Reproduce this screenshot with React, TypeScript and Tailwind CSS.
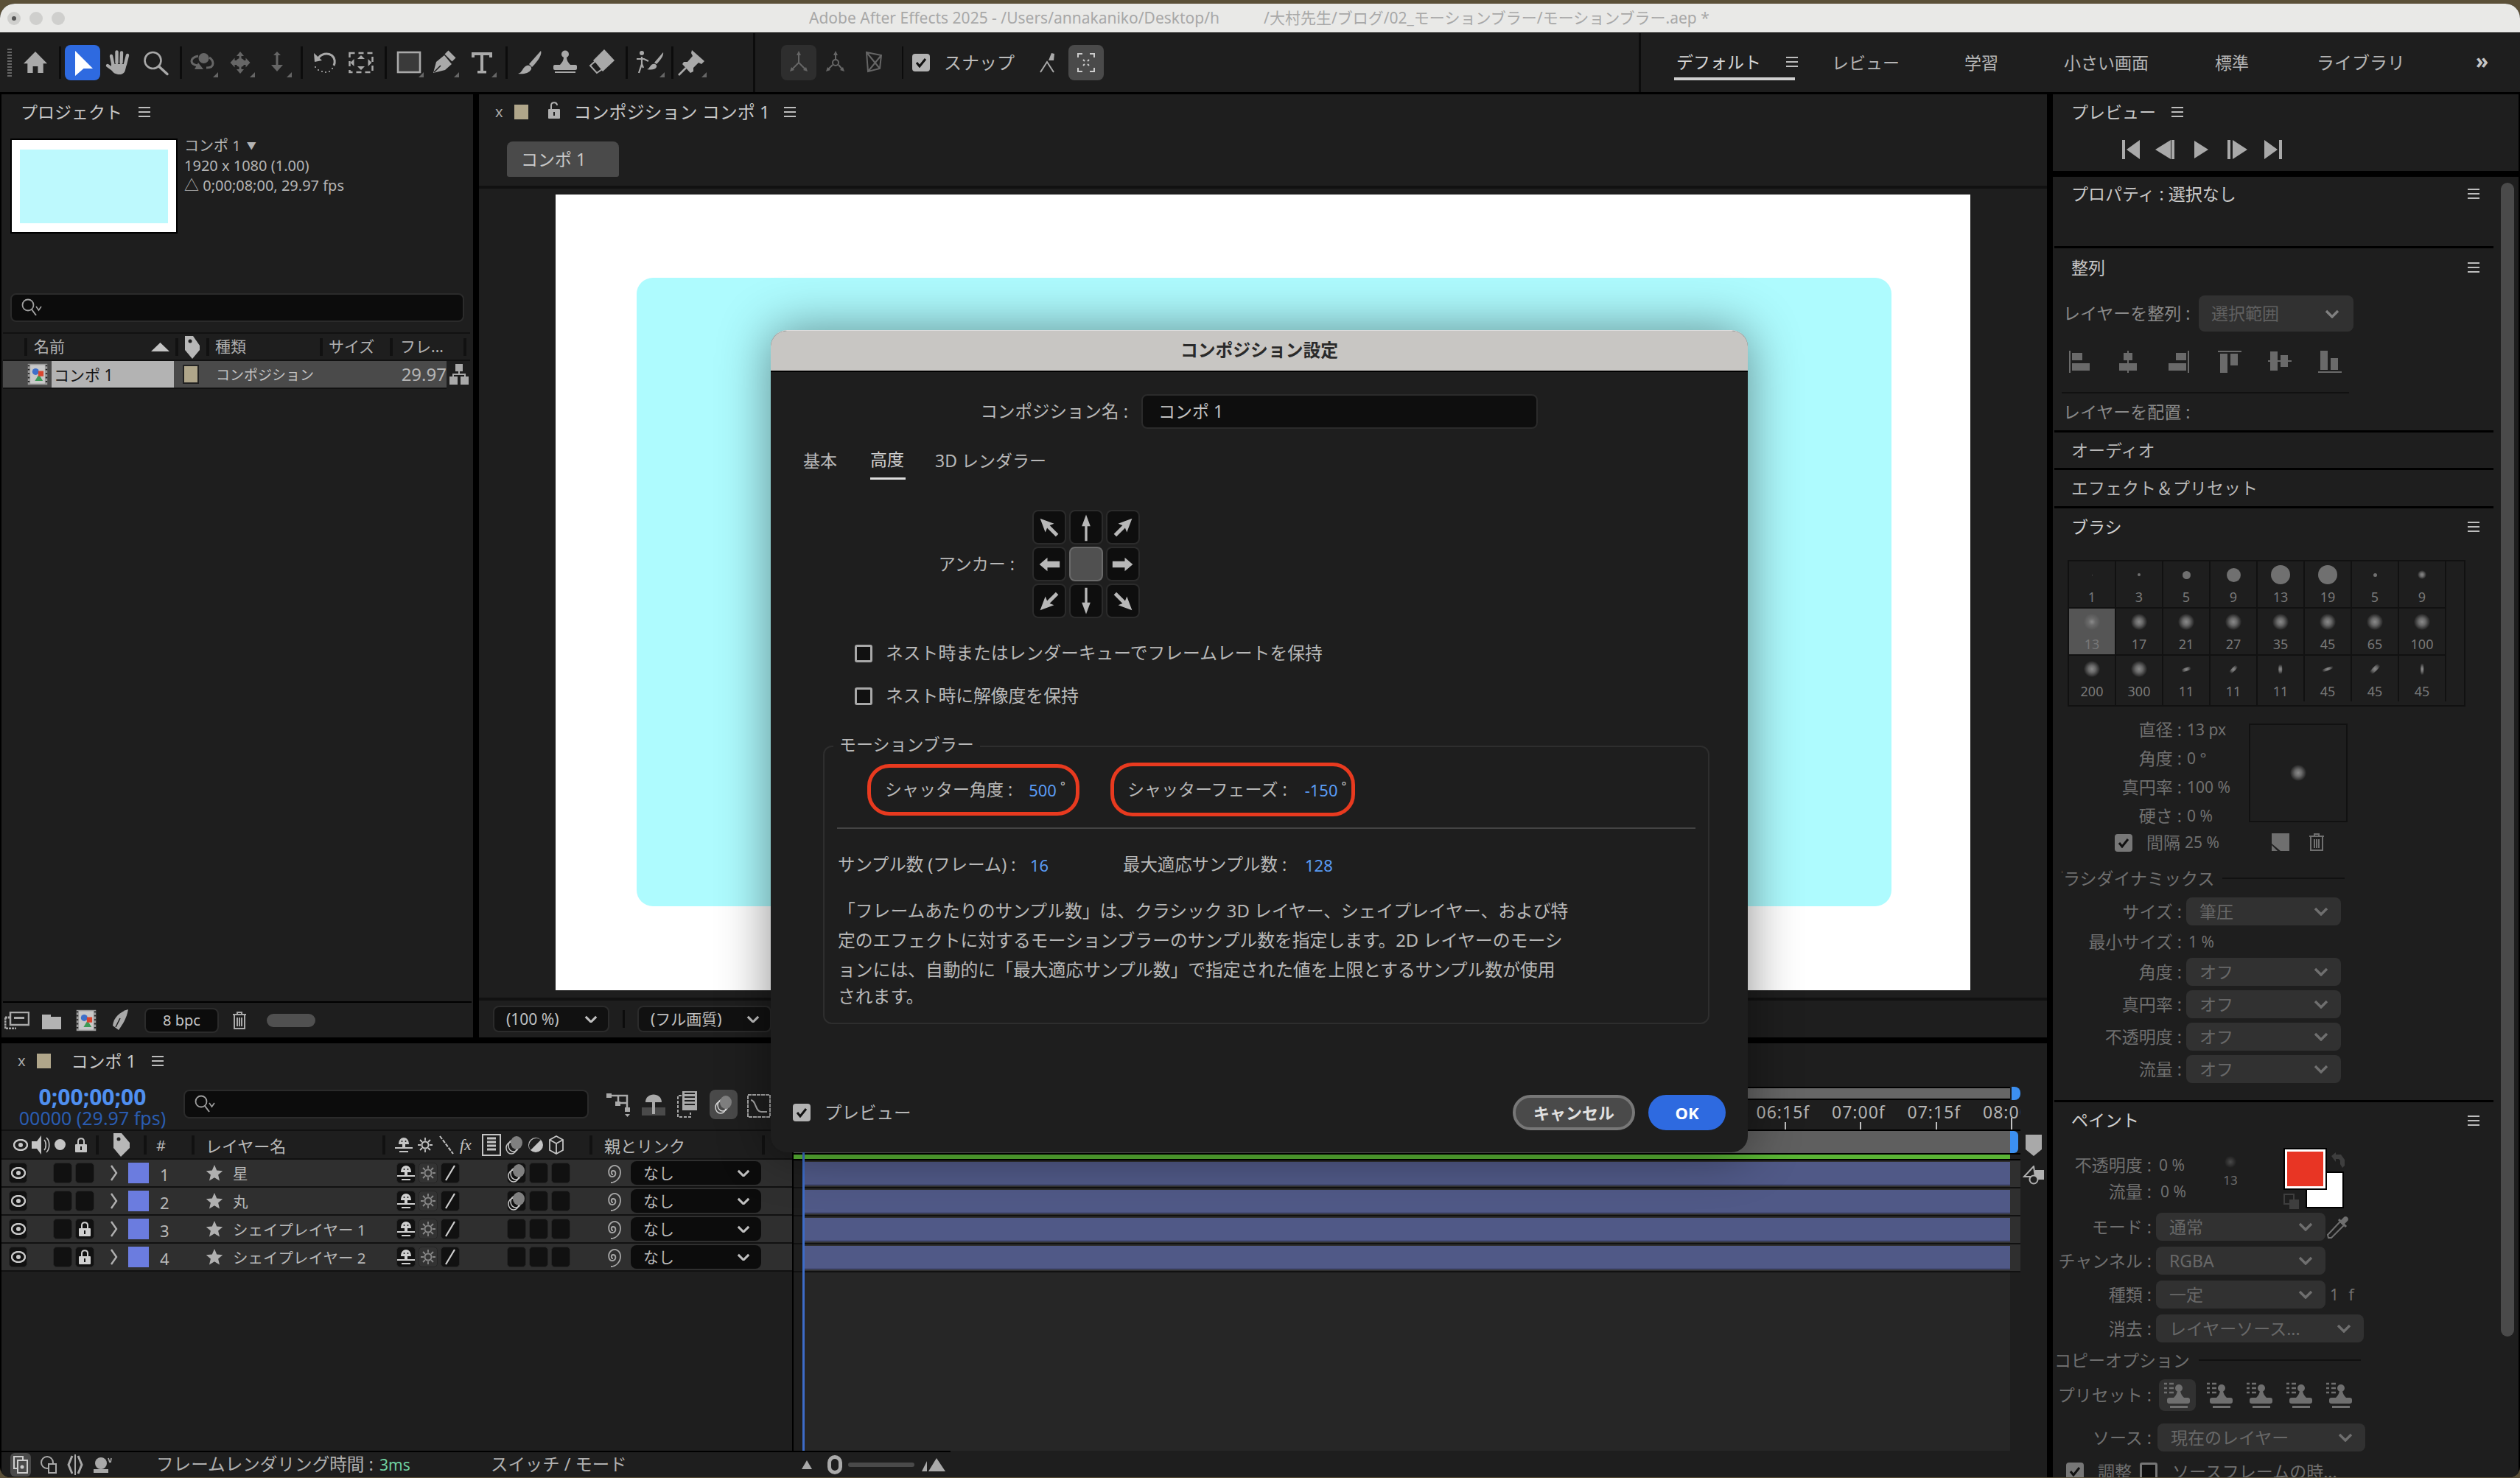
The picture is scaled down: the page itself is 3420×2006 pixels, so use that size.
import React from "react";

const C = "#a9a9a9";
const D = "#666666";

function Svg({ w = 48, h = 48, children, className = "" }: { w?: number; h?: number; children?: React.ReactNode; className?: string }) {
  return (
    <svg width={w} height={h} viewBox={`0 0 ${w} ${h}`} className={"block flex-none " + className}>
      {children}
    </svg>
  );
}

const Fly = ({ c = D }: { c?: string }) => <path d="M44 37v7h-7z" fill={c} />;

function Menu({ c = "#bdbdbd" }: { c?: string }) {
  return (
    <svg width={16} height={14} viewBox="0 0 16 14" className="block flex-none">
      <rect x="0" y="0" width="16" height="2" fill={c} />
      <rect x="0" y="6" width="16" height="2" fill={c} />
      <rect x="0" y="12" width="16" height="2" fill={c} />
    </svg>
  );
}

function Chevron({ c = "#777", s = 20 }: { c?: string; s?: number }) {
  return (
    <svg width={s} height={s * 0.6} viewBox="0 0 20 12" className="block flex-none">
      <path d="M2 2l8 8 8-8" fill="none" stroke={c} strokeWidth="3.4" />
    </svg>
  );
}

function Check({ dim = false, className = "" }: { dim?: boolean; className?: string }) {
  return (
    <div className={(dim ? "bg-[#777] " : "bg-[#b3b3b3] ") + "w-[24px] h-[24px] rounded-[4px] flex items-center justify-center flex-none " + className}>
      <svg width={16} height={14} viewBox="0 0 16 14">
        <path d="M2 7l4 5 8-10" fill="none" stroke="#111" strokeWidth="3" />
      </svg>
    </div>
  );
}

function Box({ className = "" }: { className?: string }) {
  return <div className={"w-[24px] h-[24px] rounded-[3px] border-[3px] border-[#a8a8a8] bg-[#111] flex-none " + className} />;
}

const Sep = () => <div className="w-[3px] h-[44px] bg-[#0c0c0c] flex-none" />;

function ToolBarLeft() {
  return (
    <div className="flex items-center h-full w-[1022px] flex-none">
      <div className="ml-[10px] w-[6px] h-[38px] flex-none bg-[repeating-linear-gradient(180deg,#666_0,#666_2px,#1e1e1e_2px,#1e1e1e_4px)]" />
      <div className="w-[64px] flex justify-center flex-none">
        <Svg><path d="M24 9L8 25.300h5.300V38h7.300v-9h6.800v9h7.300V25.300H40z" fill={C} /></Svg>
      </div>
      <Sep />
      <div className="ml-[5px] w-[48px] h-[48px] rounded-[8px] bg-[#2e6ae0] flex-none">
        <Svg><path d="M14 8l24 24H25.500L14 42z" fill="#fff" /></Svg>
      </div>
      <div className="w-[52px] flex justify-center flex-none">
        <Svg>
          <g stroke={C} strokeWidth="4.400" strokeLinecap="round" fill="none">
            <path d="M15.500 27L13 15" />
            <path d="M20.500 24V9.500" />
            <path d="M26.500 24l.5-13.500" />
            <path d="M32 26l3-12" />
            <path d="M15 33l-7-5" />
          </g>
          <path d="M13 26h21l-2 8c-1 4-4 6-8 6-5 0-9-2-11-7z" fill={C} />
        </Svg>
      </div>
      <div className="w-[48px] flex justify-center flex-none">
        <Svg>
          <circle cx="19.500" cy="21" r="11" fill="none" stroke={C} strokeWidth="2.600" />
          <path d="M27.500 29L39 39.500" stroke={C} strokeWidth="3.400" strokeLinecap="round" />
        </Svg>
      </div>
      <div className="ml-[8px]"><Sep /></div>
      <div className="ml-[5px] w-[50px] flex-none">
        <Svg>
          <circle cx="24.500" cy="18" r="7" fill={D} />
          <path d="M17 15c-5 1-9 3-9 7 0 3 3 5 8 6" fill="none" stroke={D} strokeWidth="3" />
          <path d="M32 17c3 2 5 5 5 8 0 4-3 6-9 6" fill="none" stroke={D} strokeWidth="3" />
          <path d="M12 33l5-9 7 9z" fill={D} />
          <Fly />
        </Svg>
      </div>
      <div className="w-[50px] flex-none">
        <Svg>
          <path d="M24 9l5 6h-3.500v6h6v-3.500l6 6.500-6 6.500V27h-6v6H29l-5 6-5-6h3.500v-6h-6v3.500l-6-6.500 6-6.500V21h6v-6H19z" fill={D} />
          <circle cx="24" cy="24" r="6" fill={D} />
          <Fly />
        </Svg>
      </div>
      <div className="w-[50px] flex-none">
        <Svg>
          <path d="M24 9l5 5h-3.500v13H32l-8 9-8-9h6.500V14H19z" fill={D} />
          <Fly />
        </Svg>
      </div>
      <div className="ml-[6px]"><Sep /></div>
      <div className="w-[59px] flex justify-center flex-none">
        <Svg>
          <path d="M15 18C19 12 27 10 33 14 38 18 38 24 36 28" fill="none" stroke={C} strokeWidth="3" />
          <path d="M9 11l1 12 10-2z" fill={C} />
          <g fill={C}>
            <circle cx="11" cy="30" r="1.100" /><circle cx="15" cy="34" r="1.100" /><circle cx="20" cy="36" r="1.100" />
            <circle cx="25" cy="37" r="1.100" /><circle cx="30" cy="36" r="1.100" /><circle cx="34" cy="32" r="1.100" />
          </g>
        </Svg>
      </div>
      <div className="w-[40px] flex justify-center flex-none">
        <Svg>
          <rect x="8.500" y="11" width="31" height="26" fill="none" stroke={C} strokeWidth="2.500" strokeDasharray="7 5" />
          <path d="M24 14l5 5H19zM24 34l5-5H19zM9.500 24l5-5v10zM38.500 24l-5-5v10z" fill={C} />
        </Svg>
      </div>
      <div className="ml-[12px]"><Sep /></div>
      <div className="w-[59px] flex justify-center flex-none">
        <Svg>
          <rect x="9" y="10" width="30" height="27" fill="#3a3a3a" stroke={C} strokeWidth="2.600" />
          <Fly />
        </Svg>
      </div>
      <div className="w-[38px] flex justify-center flex-none">
        <Svg>
          <path d="M9 38l4-15 11-9 10 12-9 8z" fill={C} />
          <path d="M10 37l9-9" stroke="#1e1e1e" strokeWidth="1.600" />
          <path d="M27 10l10 10" stroke={C} strokeWidth="7" />
          <Fly />
        </Svg>
      </div>
      <div className="w-[64px] flex justify-center flex-none">
        <Svg>
          <rect x="10" y="10" width="28" height="4" fill={C} />
          <rect x="10" y="10" width="4" height="7" fill={C} />
          <rect x="34" y="10" width="4" height="7" fill={C} />
          <rect x="22" y="10" width="4" height="27" fill={C} />
          <rect x="18" y="35" width="12" height="3.500" fill={C} />
          <Fly />
        </Svg>
      </div>
      <Sep />
      <div className="w-[60px] flex justify-center flex-none">
        <Svg>
          <path d="M8 39c6-1 6-9 12-11 4-1 7 2 6 5-3 6-12 7-18 6z" fill={C} />
          <path d="M23 26L39 8c2 4-3 13-12 22z" fill={C} />
        </Svg>
      </div>
      <div className="w-[36px] flex justify-center flex-none">
        <Svg>
          <circle cx="24" cy="12.500" r="5" fill={C} />
          <path d="M22 16h4c0 5 2 8 6 12H16c4-4 6-7 6-12z" fill={C} />
          <rect x="8" y="27" width="32" height="7" rx="2" fill={C} />
          <rect x="10" y="36" width="28" height="2" fill={C} />
        </Svg>
      </div>
      <div className="w-[64px] flex justify-center flex-none">
        <Svg>
          <path d="M27 6l14 15-16 15-13-15z" fill={C} />
          <path d="M8 28l9 10 7-5-9-11z" fill="#1e1e1e" stroke={C} strokeWidth="2" />
        </Svg>
      </div>
      <Sep />
      <div className="w-[59px] flex justify-center flex-none">
        <Svg>
          <circle cx="13" cy="11" r="3" fill={C} />
          <path d="M6 19h10l6 3M13 16v10l-4 12M13 26l2 5" fill="none" stroke={C} strokeWidth="2.200" />
          <path d="M20 33c4-1 4-6 8-7 3-1 6 1 5 4-2 4-8 4-13 3z" fill={C} />
          <path d="M30 24L42 10c1 4-3 10-9 16z" fill={C} />
          <Fly />
        </Svg>
      </div>
      <Sep />
      <div className="w-[50px] flex justify-center flex-none">
        <Svg>
          <path d="M24 7l17 15-4 4-4-2-7 7v5l-4 2-11-12 2-3h5l7-8-2-4z" fill={C} />
          <path d="M16 31L6 41" stroke={C} strokeWidth="2.600" />
          <Fly />
        </Svg>
      </div>
    </div>
  );
}

function ToolBarMid() {
  return (
    <div className="flex items-center h-full w-[1205px] flex-none border-l-[3px] border-r-[3px] border-[#0c0c0c]">
      <div className="ml-[35px] w-[48px] h-[48px] rounded-[8px] bg-[#2e2e2e] flex-none">
        <Svg>
          <path d="M24 10v14M24 24l-10 10M24 24l10 10" stroke={D} strokeWidth="2" />
          <path d="M24 8l3 6h-6zM12 36l2-6 4 4zM36 36l-2-6-4 4z" fill={D} />
        </Svg>
      </div>
      <div className="ml-[2px] w-[48px] flex-none">
        <Svg>
          <circle cx="24" cy="24" r="4" fill="none" stroke={D} strokeWidth="2" />
          <path d="M24 10v10M20 27l-7 7M28 27l6 7" stroke={D} strokeWidth="2" />
          <path d="M24 8l3 6h-6zM11 36l2-6 4 4zM36 36l-2-6-4 4z" fill={D} />
        </Svg>
      </div>
      <div className="ml-[4px] w-[48px] flex-none">
        <Svg>
          <path d="M14 10l20 4-2 18-16 4zM14 10l18 22M16 36l18-22" fill="none" stroke={D} strokeWidth="2" />
        </Svg>
      </div>
      <div className="ml-[14px] w-[2px] h-[44px] bg-[#0c0c0c] flex-none" />
      <Check className="ml-[12px]" />
      <span className="ml-[19px] text-[24px] text-[#bbbbbb] whitespace-nowrap flex-none">スナップ</span>
      <div className="ml-[22px] w-[48px] flex-none">
        <Svg>
          <path d="M13 37l9-14 9 14" fill="none" stroke="#aaa" strokeWidth="2" />
          <path d="M24 21l4-10 4 1-1 9z" fill="#aaa" />
        </Svg>
      </div>
      <div className="ml-[3px] w-[48px] h-[48px] rounded-[8px] bg-[#4a4a4a] flex-none">
        <Svg>
          <path d="M13 17v-5h6M29 12h6v5M35 31v5h-6M19 36h-6v-5M20 20l2 2M28 20l-2 2M20 28l2-2M28 28l-2-2" fill="none" stroke="#ccc" strokeWidth="2" />
        </Svg>
      </div>
    </div>
  );
}

function ToolBarRight() {
  const cls = "text-[23px] text-[#b5b5b5] flex-none whitespace-nowrap";
  return (
    <div className="flex items-center h-full flex-1 relative">
      <div className="ml-[45px] w-[164px] h-[48px] flex items-center border-b-[4px] border-[#cfcfcf] flex-none pt-[2px]">
        <span className="ml-[3px] w-[116px] flex-none text-[23px] text-[#d5d5d5] whitespace-nowrap">デフォルト</span>
        <div className="ml-[33px]"><Menu /></div>
      </div>
      <span className={cls + " ml-[50px]"}>レビュー</span>
      <span className={cls + " ml-[88px]"}>学習</span>
      <span className={cls + " ml-[89px]"}>小さい画面</span>
      <span className={cls + " ml-[90px]"}>標準</span>
      <span className="ml-[92px] text-[24px] text-[#b5b5b5] flex-none whitespace-nowrap">ライブラリ</span>
      <span className="ml-[96px] text-[28px] text-[#c5c5c5] font-bold leading-none mb-[6px]">»</span>
    </div>
  );
}

function PanelHeader({ children }: { children: React.ReactNode }) {
  return <div className="h-[48px] flex items-center flex-none">{children}</div>;
}

const FilmIcon = () => (
  <svg width={30} height={32} viewBox="0 0 30 32" className="block flex-none">
    <rect x="0" y="0" width="30" height="32" fill="#9a9a9a" />
    <rect x="4" y="2" width="22" height="28" fill="#c8c8c8" />
    <path d="M0 3h3M0 9h3M0 15h3M0 21h3M0 27h3M27 3h3M27 9h3M27 15h3M27 21h3M27 27h3" stroke="#222" strokeWidth="2" />
    <circle cx="12" cy="12" r="5" fill="#3f6fc9" />
    <path d="M11 26l6-10 6 10z" fill="#3d9a56" />
    <rect x="16" y="11" width="8" height="8" fill="#d9452f" />
  </svg>
);

function Project() {
  const SepC = () => <div className="w-[4px] h-[24px] bg-[#111] flex-none" />;
  return (
    <div className="w-[640px] flex-none h-full bg-[#1e1e1e] flex flex-col overflow-hidden">
      <PanelHeader>
        <span className="ml-[26px] text-[23px] text-[#c8c8c8]">プロジェクト</span>
        <div className="ml-[22px]"><Menu /></div>
      </PanelHeader>
      <div className="mt-[12px] ml-[12px] flex flex-none">
        <div className="w-[227px] h-[129px] border-[2px] border-black bg-white flex items-center justify-center flex-none">
          <div className="w-[201px] h-[100px] bg-[#bdf9fd]" />
        </div>
        <div className="ml-[9px] mt-[-4px] text-[20px] leading-[27px] text-[#b4b4b4]">
          <div className="flex items-center gap-[8px]"><span>コンポ 1</span><span className="text-[13px]">▼</span></div>
          <div>1920 x 1080 (1.00)</div>
          <div>△ 0;00;08;00, 29.97 fps</div>
        </div>
      </div>
      <div className="mt-[81px] ml-[12px] w-[616px] h-[39px] rounded-[8px] bg-[#0c0c0c] border-[2px] border-[#2b2b2b] flex items-center pl-[12px] flex-none">
        <SearchGlyph />
      </div>
      <div className="mt-[14px] ml-[2px] w-[634px] h-[2px] bg-[#111] flex-none" />
      <div className="h-[35px] flex items-center text-[21px] text-[#b0b0b0] flex-none">
        <div className="w-[31px]" />
        <SepC />
        <span className="w-[168px] pl-[9px]">名前</span>
        <svg width={25} height={12} viewBox="0 0 25 12" className="flex-none"><path d="M12.500 0L25 12H0z" fill="#c4c4c4" /></svg>
        <div className="w-[8px]" />
        <SepC />
        <div className="w-[38px] flex justify-center flex-none">
          <svg width={24} height={34} viewBox="0 0 24 34"><path d="M2 2h11l9 13v6L12 33 2 21z" fill="#b8b8b8" /><circle cx="9" cy="9" r="2.500" fill="#1e1e1e" /></svg>
        </div>
        <SepC />
        <span className="w-[150px] pl-[8px]">種類</span>
        <SepC />
        <span className="w-[91px] pl-[8px]">サイズ</span>
        <SepC />
        <span className="w-[96px] pl-[10px]">フレ...</span>
        <SepC />
      </div>
      <div className="h-[2px] ml-[2px] w-[634px] bg-[#111] flex-none" />
      <div className="flex h-[36px] flex-none items-center">
        <div className="ml-[2px] w-[602px] h-full bg-[#4a4a4a] flex items-center">
          <div className="w-[66px] h-full flex items-center pl-[32px] flex-none"><div className="scale-90"><FilmIcon /></div></div>
          <div className="w-[166px] h-full bg-[#b3b3b3] text-[#151515] text-[21px] flex items-center pl-[3px] pt-[2px] flex-none">コンポ 1</div>
          <div className="ml-[12px] w-[22px] h-[26px] bg-[#b0a68a] border-[2px] border-[#222] flex-none" />
          <span className="ml-[23px] pt-[2px] text-[19px] text-[#c4c4c4] flex-none">コンポジション</span>
          <span className="ml-auto text-[24px] text-[#b4b4b4]">29.97</span>
        </div>
        <svg width={26} height={30} viewBox="0 0 26 30" className="ml-[4px] flex-none">
          <rect x="8" y="1" width="10" height="10" fill={C} />
          <rect x="0" y="18" width="11" height="11" fill={C} />
          <rect x="15" y="18" width="11" height="11" fill={C} />
          <path d="M13 11v4M5 18v-3h16v3" fill="none" stroke={C} strokeWidth="2" />
        </svg>
      </div>
      <div className="h-[2px] ml-[2px] w-[602px] bg-[#111] flex-none" />
      <div className="flex-1" />
      <div className="h-[2px] ml-[2px] w-[636px] bg-[#000] flex-none" />
      <div className="h-[47px] flex items-center flex-none">
        <svg width={34} height={24} viewBox="0 0 34 24" className="ml-[4px] flex-none">
          <rect x="8" y="1" width="25" height="17" fill="none" stroke={C} strokeWidth="2.500" />
          <rect x="13" y="7" width="14" height="3" fill={C} />
          <path d="M1 8h7M1 8v15h15" fill="none" stroke={C} strokeWidth="3" strokeDasharray="3 1" />
        </svg>
        <svg width={28} height={26} viewBox="0 0 28 26" className="ml-[16px] flex-none">
          <path d="M1 5h12v3h14v17H1z" fill="#b3b3b3" />
        </svg>
        <div className="ml-[18px] scale-90 flex-none"><FilmIcon /></div>
        <svg width={28} height={32} viewBox="0 0 28 32" className="ml-[17px] flex-none">
          <path d="M25 1C14 4 5 12 4 23l8 6c5-7 11-16 13-28z" fill={C} />
          <path d="M8 25l6-12" stroke="#1e1e1e" strokeWidth="1.600" />
        </svg>
        <div className="ml-[19px] w-[101px] h-[34px] rounded-[8px] bg-[#0c0c0c] border-[2px] border-[#2b2b2b] text-[20px] text-[#c4c4c4] flex items-center justify-center flex-none">8 bpc</div>
        <svg width={20} height={26} viewBox="0 0 20 26" className="ml-[18px] flex-none">
          <path d="M1 5h18M7 5V2h6v3M3 5v19h14V5M7 9v12M10 9v12M13 9v12" fill="none" stroke={C} strokeWidth="2" />
        </svg>
        <div className="ml-[27px] w-[66px] h-[18px] rounded-[9px] bg-[#505050] flex-none" />
      </div>
    </div>
  );
}

function SearchGlyph() {
  return (
    <svg width={32} height={28} viewBox="0 0 32 28" className="block flex-none">
      <circle cx="10" cy="10" r="7.500" fill="none" stroke="#a0a0a0" strokeWidth="1.800" />
      <path d="M15 16l6 8" stroke="#a0a0a0" strokeWidth="2" />
      <path d="M21 12l3.500 5L28 12" fill="none" stroke="#a0a0a0" strokeWidth="1.600" />
    </svg>
  );
}

function Comp() {
  return (
    <div className="flex-1 h-full bg-[#1e1e1e] flex flex-col overflow-hidden">
      <PanelHeader>
        <span className="ml-[22px] text-[20px] text-[#aaa]">x</span>
        <div className="ml-[15px] w-[19px] h-[20px] bg-[#b0a68a] flex-none" />
        <svg width={18} height={24} viewBox="0 0 18 24" className="ml-[26px] mb-[4px] flex-none">
          <path d="M5 10V5c0-5 8-5 8 0" fill="none" stroke="#b0b0b0" strokeWidth="2" />
          <rect x="1" y="10" width="16" height="13" rx="1" fill="#b0b0b0" />
          <rect x="8" y="14" width="2" height="5" fill="#1e1e1e" />
        </svg>
        <span className="ml-[18px] text-[24px] text-[#c8c8c8] whitespace-nowrap">コンポジション コンポ 1</span>
        <div className="ml-[19px]"><Menu /></div>
      </PanelHeader>
      <div className="h-[76px] pt-[16px] pl-[38px] flex-none">
        <div className="w-[152px] h-[48px] bg-[#4a4a4a] rounded-t-[8px] rounded-b-[3px] text-[23px] text-[#c8c8c8] flex items-center pl-[19px]">コンポ 1</div>
      </div>
      <div className="h-[4px] bg-[#111] flex-none" />
      <div className="flex-1 pt-[8px] pl-[104px]">
        <div className="w-[1920px] h-[1080px] bg-white pt-[113px] pl-[110px]">
          <div className="w-[1703px] h-[853px] rounded-[22px] bg-[#aefbfe]" />
        </div>
      </div>
      <div className="h-[4px] bg-[#111] flex-none" />
      <div className="h-[50px] flex items-center flex-none">
        <div className="ml-[19px] w-[158px] h-[36px] rounded-[8px] bg-[#111] border-[2px] border-[#2b2b2b] text-[21px] text-[#c0c0c0] flex items-center pl-[16px] flex-none">
          (100 %)
          <div className="ml-auto mr-[14px]"><Chevron c="#c0c0c0" s={18} /></div>
        </div>
        <div className="ml-[18px] w-[3px] h-[24px] bg-[#0c0c0c]" />
        <div className="ml-[17px] w-[182px] h-[36px] rounded-[8px] bg-[#111] border-[2px] border-[#2b2b2b] text-[21px] text-[#c0c0c0] flex items-center pl-[16px] flex-none">
          (フル画質)
          <div className="ml-auto mr-[14px]"><Chevron c="#c0c0c0" s={18} /></div>
        </div>
      </div>
    </div>
  );
}

const layers = [
  { n: "1", name: "星", lock: false, mb: true },
  { n: "2", name: "丸", lock: false, mb: true },
  { n: "3", name: "シェイプレイヤー 1", lock: true, mb: false },
  { n: "4", name: "シェイプレイヤー 2", lock: true, mb: false },
];

const Cell = ({ children, className = "" }: { children?: React.ReactNode; className?: string }) => (
  <div className={"w-[26px] h-[28px] rounded-[5px] bg-[#111] border border-[#262626] flex items-center justify-center flex-none " + className}>{children}</div>
);

const Eye = () => (
  <svg width={20} height={16} viewBox="0 0 20 16" className="flex-none">
    <ellipse cx="10" cy="8" rx="9" ry="7" fill="none" stroke="#c8c8c8" strokeWidth="2.400" />
    <circle cx="10" cy="8" r="3" fill="#c8c8c8" />
  </svg>
);

const Lock = ({ c = "#d0d0d0" }: { c?: string }) => (
  <svg width={18} height={22} viewBox="0 0 18 22" className="flex-none">
    <path d="M5 10V6c0-5 8-5 8 0v4" fill="none" stroke={c} strokeWidth="2" />
    <rect x="1" y="10" width="16" height="11" rx="1" fill={c} />
    <rect x="8" y="13" width="2" height="5" fill="#111" />
  </svg>
);

const Shy = ({ c = "#d0d0d0" }: { c?: string }) => (
  <svg width={24} height={24} viewBox="0 0 24 24" className="flex-none">
    <path d="M5 11c0-12 14-12 14 0H14v5h-4v-5z" fill={c} />
    <circle cx="9.500" cy="7" r="1" fill="#111" /><circle cx="14.500" cy="7" r="1" fill="#111" />
    <path d="M0 16h24M6 21h12" stroke={c} strokeWidth="2" />
  </svg>
);

const Sun = ({ c = "#888" }: { c?: string }) => (
  <svg width={22} height={22} viewBox="0 0 22 22" className="flex-none">
    <circle cx="11" cy="11" r="4.500" fill="none" stroke={c} strokeWidth="2" />
    <path d="M11 1v4M11 17v4M1 11h4M17 11h4M4 4l3 3M15 15l3 3M18 4l-3 3M7 15l-3 3" stroke={c} strokeWidth="1.800" />
  </svg>
);

const Blur = ({ c = "#c8c8c8" }: { c?: string }) => (
  <svg width={24} height={26} viewBox="0 0 24 26" className="flex-none">
    <ellipse cx="8" cy="17" rx="7" ry="8" fill="none" stroke={c} strokeWidth="1.500" />
    <ellipse cx="11" cy="14" rx="7" ry="8" fill="none" stroke={c} strokeWidth="1.500" />
    <ellipse cx="15" cy="10" rx="8" ry="9" fill="#808080" />
  </svg>
);

const Star = () => (
  <svg width={24} height={24} viewBox="0 0 24 24" className="flex-none">
    <path d="M12 1l3.200 7.500 8 .7-6.100 5.300 1.900 8L12 18.200 5 22.500l1.900-8L.8 9.200l8-.7z" fill="#b0b0b0" />
  </svg>
);

const Spiral = () => (
  <svg width={24} height={30} viewBox="0 0 24 30" className="flex-none">
    <path d="M12 17c-3 0-3-5 0-5 4 0 5 6 0 8-6 1-8-8-3-13 6-5 13 0 13 7 0 8-6 14-13 14" fill="none" stroke="#a8a8a8" strokeWidth="1.800" />
  </svg>
);

function LayerRow({ l }: { l: (typeof layers)[number] }) {
  return (
    <div className="h-[36px] bg-[#2f2f2f] flex items-center flex-none">
      <Cell className="ml-[10px] !w-[25px]"><Eye /></Cell>
      <Cell className="ml-[35px]" />
      <Cell className="ml-[4px]">{l.lock && <Lock />}</Cell>
      <div className="w-[46px] pl-[21px] flex-none">
        <svg width={12} height={24} viewBox="0 0 12 24"><path d="M2 2l7 10-7 10" fill="none" stroke="#b0b0b0" strokeWidth="2.400" /></svg>
      </div>
      <div className="w-[28px] h-[28px] bg-[#6b7cdf] flex-none" />
      <span className="w-[77px] pl-[15px] pt-[3px] text-[22px] text-[#b8b8b8] flex-none">{l.n}</span>
      <Star />
      <span className="ml-[13px] pt-[3px] w-[222px] text-[20.500px] text-[#b8b8b8] flex-none whitespace-nowrap">{l.name}</span>
      <Cell><Shy /></Cell>
      <Cell className="ml-[4px] !bg-[#333]"><Sun /></Cell>
      <Cell className="ml-[4px]">
        <svg width={18} height={24} viewBox="0 0 18 24"><path d="M15 2L3 22" stroke="#d0d0d0" strokeWidth="2.200" /></svg>
      </Cell>
      <Cell className="ml-[64px]">{l.mb && <Blur />}</Cell>
      <Cell className="ml-[4px]" />
      <Cell className="ml-[4px]" />
      <div className="w-[82px] pl-[46px] flex-none"><Spiral /></div>
      <div className="w-[177px] h-[32px] rounded-[8px] bg-[#0c0c0c] flex items-center pl-[17px] text-[21px] text-[#b8b8b8] flex-none">
        なし
        <div className="ml-auto mr-[15px]"><Chevron c="#c0c0c0" s={18} /></div>
      </div>
    </div>
  );
}

function TimelineLeft() {
  const SepC = () => <div className="w-[4px] h-[26px] bg-[#111] flex-none" />;
  return (
    <div className="w-[1073px] flex-none flex flex-col">
      <PanelHeader>
        <span className="ml-[22px] text-[20px] text-[#aaa]">x</span>
        <div className="ml-[15px] w-[19px] h-[20px] bg-[#b0a68a] flex-none" />
        <span className="ml-[28px] text-[23px] text-[#c8c8c8]">コンポ 1</span>
        <div className="ml-[21px]"><Menu /></div>
      </PanelHeader>
      <div className="h-[69px] flex items-center flex-none">
        <div className="w-[247px] flex-none text-center pt-[6px]">
          <div className="text-[30px] leading-[30px] font-bold text-[#4f8ff0]">0;00;00;00</div>
          <div className="text-[25px] leading-[26px] text-[#2a5cb0] whitespace-nowrap">00000 (29.97 fps)</div>
        </div>
        <div className="w-[550px] h-[39px] rounded-[8px] bg-[#0c0c0c] border-[2px] border-[#2b2b2b] flex items-center pl-[12px] flex-none">
          <SearchGlyph />
        </div>
        <svg width={38} height={36} viewBox="0 0 38 36" className="ml-[22px] flex-none">
          <path d="M6 6h24v18M18 6v10h12" fill="none" stroke={C} strokeWidth="2.500" />
          <rect x="2" y="3" width="7" height="6" fill={C} /><rect x="14" y="14" width="7" height="6" fill={C} /><rect x="27" y="22" width="7" height="6" fill={C} />
          <path d="M27 31h7l-3.500 4z" fill={C} />
        </svg>
        <div className="ml-[12px] flex-none"><svg width={32} height={34} viewBox="0 0 32 34"><path d="M5 14C5 0 27 0 27 14h-9v6h-4v-6z" fill={C} /><rect x="0" y="21" width="32" height="11" fill="#4a4a4a" /><rect x="14" y="20" width="4" height="10" fill={C} /></svg></div>
        <div className="ml-[15px] flex-none"><svg width={30} height={38} viewBox="0 0 30 38"><rect x="8" y="1" width="20" height="26" fill={C} /><path d="M11 4h14M11 9h14M11 14h14M11 19h14" stroke="#1e1e1e" strokeWidth="2" /><path d="M7 7H2v29h17v-6" fill="none" stroke={C} strokeWidth="2" strokeDasharray="4 2" /></svg></div>
        <div className="ml-[15px] w-[38px] h-[40px] rounded-[8px] bg-[#4a4a4a] flex items-center justify-center flex-none"><Blur c="#d8d8d8" /></div>
        <div className="ml-[12px] flex-none"><svg width={34} height={36} viewBox="0 0 34 36"><rect x="2" y="5" width="30" height="30" fill="none" stroke={C} strokeWidth="2" strokeDasharray="5 1" /><path d="M6 12c7 0 6 16 14 16h8" fill="none" stroke={C} strokeWidth="2" /></svg></div>
      </div>
      <div className="h-[2px] bg-[#111] flex-none" />
      <div className="h-[37px] flex items-center flex-none">
        <div className="ml-[15px] w-[22px] flex justify-center flex-none"><Eye /></div>
        <svg width={26} height={28} viewBox="0 0 26 28" className="ml-[3px] flex-none"><path d="M1 9h7l6-8v26l-6-8H1z" fill="#c4c4c4" /><path d="M18 7c3 3 3 11 0 14M21 4c5 5 5 15 0 20" fill="none" stroke="#c4c4c4" strokeWidth="1.600" /></svg>
        <div className="ml-[6px] w-[15px] h-[15px] rounded-full bg-[#c4c4c4] flex-none" />
        <div className="ml-[12px] flex-none"><Lock c="#c4c4c4" /></div>
        <div className="ml-[11px]"><SepC /></div>
        <div className="w-[61px] flex justify-center flex-none">
          <svg width={26} height={34} viewBox="0 0 26 34"><path d="M2 1h11l11 13v7L12 33 2 21z" fill="#b8b8b8" /><circle cx="9" cy="9" r="2.500" fill="#1e1e1e" /></svg>
        </div>
        <SepC />
        <span className="w-[61px] pl-[13px] pt-[3px] text-[20px] text-[#b0b0b0] flex-none">#</span>
        <SepC />
        <span className="w-[255px] pl-[15px] pt-[3px] text-[22px] text-[#b8b8b8] flex-none">レイヤー名</span>
        <SepC />
        <div className="ml-[13px] flex items-center gap-[6px] flex-none w-[264px]">
          <Shy c="#c4c4c4" />
          <Sun c="#c4c4c4" />
          <svg width={24} height={30} viewBox="0 0 24 30"><path d="M3 3l18 24" stroke="#c4c4c4" strokeWidth="2" strokeDasharray="5 1.500" /></svg>
          <span className="w-[24px] text-[22px] leading-none italic text-[#c4c4c4] font-['Liberation_Serif',serif]">fx</span>
          <svg width={26} height={30} viewBox="0 0 26 30"><rect x="1" y="1" width="24" height="28" fill="none" stroke="#c4c4c4" strokeWidth="2" /><path d="M7 6h12M7 11h12M7 16h12M7 21h12" stroke="#c4c4c4" strokeWidth="3" /></svg>
          <Blur c="#c4c4c4" />
          <svg width={22} height={22} viewBox="0 0 22 22"><circle cx="11" cy="11" r="10" fill="#c4c4c4" /><path d="M4 18L18 4A10 10 0 0 0 4 18z" fill="#1e1e1e" /></svg>
          <svg width={22} height={26} viewBox="0 0 22 26"><path d="M11 1l9 5v14l-9 5-9-5V6zM2 6l9 5 9-5M11 11v14" fill="none" stroke="#c4c4c4" strokeWidth="1.800" /></svg>
        </div>
        <SepC />
        <span className="w-[230px] pl-[16px] pt-[3px] text-[22px] text-[#b8b8b8] flex-none">親とリンク</span>
        <SepC />
      </div>
      <div className="h-[2px] bg-[#111] flex-none" />
      {layers.map((l) => (
        <React.Fragment key={l.n}>
          <LayerRow l={l} />
          <div className="h-[2px] bg-[#111] flex-none" />
        </React.Fragment>
      ))}
    </div>
  );
}

function TimelineRight() {
  const labels = ["06:15f", "07:00f", "07:15f"];
  return (
    <div className="flex-1 flex min-w-0 relative">
      <div className="w-[1665px] flex-none flex flex-col">
        <div className="h-[59px] flex-none" />
        <div className="h-[18px] flex items-center flex-none">
          <div className="w-[1651px] h-full bg-[#666] border-y-[2px] border-black flex-none" />
          <div className="ml-[2px] w-[12px] h-full bg-[#3c8ff0] rounded-r-[8px] flex-none" />
        </div>
        <div className="h-[40px] flex justify-end flex-none">
          {labels.map((t) => (
            <div key={t} className="relative w-[102.500px] text-[23px] tracking-[1px] text-[#b4b4b4] leading-[32px] flex-none">
              {t}
              <div className="absolute left-[38px] bottom-0 w-[2px] h-[10px] bg-[#c0c0c0]" />
            </div>
          ))}
          <div className="relative w-[51px] overflow-hidden text-[23px] tracking-[1px] text-[#b4b4b4] leading-[32px] whitespace-nowrap flex-none">
            08:00f
            <div className="absolute left-[38px] bottom-0 w-[2px] h-[16px] bg-[#c0c0c0]" />
          </div>
        </div>
        <div className="h-[2px] bg-black w-[1665px] flex-none" />
        <div className="h-[30px] flex flex-none">
          <div className="w-[1651px] h-full bg-[#5f5f5f] flex-none" />
          <div className="w-[11px] h-full bg-[#3c8ff0] rounded-r-[6px] flex-none" />
        </div>
        <div className="h-[2px] bg-black flex-none" />
        <div className="h-[6px] w-[1651px] bg-[#5ab535] flex-none" />
        <div className="h-[2px] bg-black flex-none" />
        {[0, 1, 2, 3].map((i) => (
          <React.Fragment key={i}>
            <div className="h-[36px] bg-[#1e1e1e] flex flex-none">
              <div className="w-[13px] flex-none" />
              <div className="w-[1652px] h-full bg-[#2f2f2f] pt-[2px] pr-[14px]">
                <div className="h-[32px] bg-[#505987] border-b-[2px] border-[#464d78]" />
              </div>
            </div>
            <div className="h-[2px] bg-[#111] flex-none" />
          </React.Fragment>
        ))}
        <div className="flex-1 flex">
          <div className="w-[13px] flex-none" />
          <div className="w-[1638px] h-full bg-[#262626]" />
        </div>
      </div>
      <div className="flex-1 flex flex-col items-center min-w-0">
        <div className="h-[123px] flex-none" />
        <svg width={24} height={30} viewBox="0 0 24 30" className="flex-none"><path d="M1 1h22v20l-11 9-11-9z" fill="#a9a9a9" /></svg>
        <div className="h-[13px] flex-none" />
        <svg width={30} height={26} viewBox="0 0 30 26" className="flex-none">
          <path d="M2 15L15 1l2 14z" fill="none" stroke="#b0b0b0" strokeWidth="2" />
          <rect x="17" y="6" width="12" height="13" fill="#b0b0b0" />
          <circle cx="15" cy="19" r="5.500" fill="#1e1e1e" stroke="#b0b0b0" strokeWidth="2" />
        </svg>
      </div>
      <div className="absolute left-[12px] top-[120px] bottom-0 w-[3px] bg-[#3d6cc8]" />
    </div>
  );
}

function Timeline() {
  return (
    <div className="flex-1 bg-[#1e1e1e] flex flex-col min-h-0 overflow-hidden">
      <div className="flex-1 flex min-h-0">
        <TimelineLeft />
        <div className="w-[2px] bg-black flex-none" />
        <TimelineRight />
      </div>
      <div className="h-[2px] w-[1288px] bg-black flex-none" />
      <div className="h-[34px] flex items-center flex-none">
        <div className="ml-[12px] w-[28px] h-[32px] rounded-[6px] bg-[#4a4a4a] flex items-center justify-center flex-none">
          <svg width={20} height={24} viewBox="0 0 20 24"><rect x="1" y="1" width="12" height="16" fill="none" stroke="#ccc" strokeWidth="2" /><rect x="6" y="6" width="13" height="17" fill="#4a4a4a" stroke="#ccc" strokeWidth="2" /><circle cx="12" cy="15" r="2.500" fill="#ccc" /></svg>
        </div>
        <svg width={26} height={26} viewBox="0 0 26 26" className="ml-[12px] flex-none"><circle cx="10" cy="10" r="8" fill="none" stroke={C} strokeWidth="2" /><rect x="12" y="12" width="10" height="12" fill="#1e1e1e" stroke={C} strokeWidth="2" /></svg>
        <svg width={24} height={28} viewBox="0 0 24 28" className="ml-[10px] flex-none"><path d="M8 2L3 14l5 12M16 2l5 12-5 12" fill="none" stroke={C} strokeWidth="3" /><rect x="11" y="0" width="2" height="28" fill={C} /></svg>
        <svg width={28} height={24} viewBox="0 0 28 24" className="ml-[12px] flex-none"><circle cx="11" cy="10" r="8" fill={C} /><rect x="1" y="18" width="20" height="5" fill={C} /><path d="M21 3l2 6M25 3l-1 6" stroke={C} strokeWidth="1.600" /></svg>
        <span className="ml-[58px] w-[303px] flex-none text-[23.600px] text-[#b0b0b0] whitespace-nowrap">フレームレンダリング時間 :</span>
        <span className="w-[151px] flex-none text-[21px] text-[#6fd0a0]">3ms</span>
        <span className="w-[422px] flex-none text-[23.400px] text-[#b0b0b0] whitespace-nowrap">スイッチ / モード</span>
        <svg width={14} height={12} viewBox="0 0 14 12" className="flex-none"><path d="M7 0l7 12H0z" fill={C} /></svg>
        <div className="ml-[21px] w-[20px] h-[26px] rounded-full border-[5px] border-[#aaa] flex-none" />
        <div className="ml-[8px] w-[90px] h-[6px] bg-[#4a4a4a] rounded-[3px] flex-none" />
        <svg width={32} height={18} viewBox="0 0 32 18" className="ml-[10px] flex-none"><path d="M7 4l-7 14h7zM20 0L9 18h23z" fill={C} /></svg>
      </div>
    </div>
  );
}

function RightTop() {
  return (
    <div className="h-[104px] bg-[#1e1e1e] flex-none">
      <div className="h-[48px] flex items-center pl-[25px]">
        <span className="text-[23px] text-[#c8c8c8]">プレビュー</span>
        <div className="ml-[21px]"><Menu /></div>
      </div>
      <div className="h-[54px] flex items-center pl-[94px]">
        <svg width={220} height={30} viewBox="0 0 220 30" fill="#a9a9a9" className="flex-none">
          <rect x="0" y="2" width="4" height="26" />
          <path d="M24 2v26L6 15z" />
          <path d="M66 2v26L45 15z" />
          <rect x="67" y="2" width="4" height="26" />
          <path d="M98 3v24l19-12z" />
          <rect x="143" y="2" width="4" height="26" />
          <path d="M150 2v26l20-13z" />
          <path d="M193 2v26l18-13z" />
          <rect x="213" y="2" width="4" height="26" />
        </svg>
      </div>
    </div>
  );
}

function Sel({ label, text, lw = 173, w = 210, h = 38, mt = "" }: { label?: string; text: string; lw?: number; w?: number; h?: number; mt?: string }) {
  return (
    <div className={"flex items-center flex-none " + mt}>
      <Lab lw={lw}>{label}</Lab>
      <DD w={w} h={h} text={text} />
    </div>
  );
}

function Lab({ lw, children }: { lw: number; children?: React.ReactNode }) {
  return (
    <span className="text-right text-[23px] text-[#6f6f6f] whitespace-nowrap flex-none" style={{ width: lw }}>
      {children}
    </span>
  );
}

function DD({ w, h, text }: { w: number; h: number; text: string }) {
  return (
    <div className="ml-[6px] rounded-[8px] bg-[#313131] flex items-center pl-[18px] text-[23px] text-[#686868] whitespace-nowrap flex-none" style={{ width: w, height: h }}>
      {text}
      <div className="ml-auto mr-[17px]"><Chevron c="#6f6f6f" /></div>
    </div>
  );
}

const brushes: { n: string; s: number; soft?: boolean; rot?: number; sx?: number }[] = [
  { n: "1", s: 1 }, { n: "3", s: 4 }, { n: "5", s: 11 }, { n: "9", s: 19 }, { n: "13", s: 26 }, { n: "19", s: 26 }, { n: "5", s: 5 }, { n: "9", s: 12, soft: true },
  { n: "13", s: 22, soft: true }, { n: "17", s: 22, soft: true }, { n: "21", s: 22, soft: true }, { n: "27", s: 22, soft: true }, { n: "35", s: 22, soft: true }, { n: "45", s: 22, soft: true }, { n: "65", s: 22, soft: true }, { n: "100", s: 22, soft: true },
  { n: "200", s: 22, soft: true }, { n: "300", s: 22, soft: true }, { n: "11", s: 18, soft: true, rot: -20, sx: 0.25 }, { n: "11", s: 18, soft: true, rot: -45, sx: 0.25 }, { n: "11", s: 18, soft: true, rot: 90, sx: 0.25 }, { n: "45", s: 22, soft: true, rot: -20, sx: 0.2 }, { n: "45", s: 22, soft: true, rot: -45, sx: 0.25 }, { n: "45", s: 22, soft: true, rot: 90, sx: 0.2 },
];

function BrushGrid() {
  return (
    <div className="ml-[20px] mt-[20px] w-[540px] h-[199px] border-[2px] border-[#111] flex-none">
      <div className="w-[512px] grid grid-cols-[repeat(8,62px)] auto-rows-[62px] gap-[2px] bg-[#111]">
        {brushes.map((b, i) => (
          <div key={i} className={(i === 8 ? "bg-[#555] " : "bg-[#1e1e1e] ") + "flex flex-col items-center"}>
            <div className="h-[36px] flex items-center justify-center">
              <div
                style={{
                  width: b.s,
                  height: b.sx ? b.s * b.sx : b.s,
                  borderRadius: "50%",
                  transform: b.rot ? `rotate(${b.rot}deg)` : undefined,
                  background: b.soft ? "radial-gradient(circle, #8a8a8a 0%, #6a6a6a 30%, rgba(100,100,100,0) 72%)" : "#707070",
                }}
              />
            </div>
            <span className="text-[18px] leading-[24px] text-[#787878]">{b.n}</span>
          </div>
        ))}
      </div>
      <div className="flex h-[7px]">
        <div className="w-[64px] border-r-[2px] border-[#111]" />
        <div className="w-[64px] border-r-[2px] border-[#111]" />
        <div className="w-[64px] border-r-[2px] border-[#111]" />
        <div className="w-[64px] border-r-[2px] border-[#111]" />
      </div>
    </div>
  );
}

function ParamRow({ label, value }: { label: string; value: string }) {
  return (
    <div className="h-[39px] flex items-center">
      <Lab lw={173}>{label}</Lab>
      <span className="ml-[7px] text-[21px] text-[#707070]">{value}</span>
    </div>
  );
}

const Stamp = () => (
  <svg width={36} height={36} viewBox="0 0 36 36" className="flex-none">
    <path d="M0 2h4M7 2h6M0 8h4M7 8h6M0 14h4M7 14h6" stroke="#6f6f6f" strokeWidth="2.400" />
    <circle cx="20" cy="8" r="5" fill="#6f6f6f" />
    <path d="M18 10h4c0 5 2 8 5 11H13c3-3 5-6 5-11z" fill="#6f6f6f" />
    <rect x="4" y="21" width="31" height="8" rx="3" fill="#6f6f6f" />
    <rect x="8" y="32" width="24" height="3" fill="#6f6f6f" />
  </svg>
);

const Divider = () => <div className="ml-[2px] w-[596px] h-[3px] bg-black flex-none" />;

function Panels() {
  const icons = [
    <g key="0"><rect x="0" y="0" width="2" height="30" /><rect x="4" y="3" width="14" height="10" /><rect x="4" y="17" width="24" height="10" /></g>,
    <g key="1"><rect x="12" y="0" width="2" height="30" /><rect x="7" y="3" width="12" height="10" /><rect x="1" y="17" width="24" height="10" /></g>,
    <g key="2"><rect x="26" y="0" width="2" height="30" /><rect x="10" y="3" width="14" height="10" /><rect x="0" y="17" width="24" height="10" /></g>,
    <g key="3"><rect x="0" y="0" width="32" height="2" /><rect x="3" y="4" width="10" height="26" /><rect x="17" y="4" width="10" height="16" /></g>,
    <g key="4"><rect x="0" y="13" width="32" height="2" /><rect x="3" y="1" width="10" height="26" /><rect x="17" y="6" width="10" height="16" /></g>,
    <g key="5"><rect x="0" y="28" width="32" height="2" /><rect x="3" y="0" width="10" height="26" /><rect x="17" y="10" width="10" height="16" /></g>,
  ];
  const gaps = ["ml-[22px]", "ml-[35px]", "ml-[36px]", "ml-[35px]", "ml-[36px]", "ml-[36px]"];
  return (
    <div className="flex-1 bg-[#1e1e1e] flex min-h-0 overflow-hidden mt-[8px]">
      <div className="w-[600px] flex-none flex flex-col">
        <div className="h-[94px] flex-none">
          <div className="h-[46px] flex items-center pl-[25px] pr-[21px] justify-between">
            <span className="text-[23px] text-[#c8c8c8]">プロパティ : 選択なし</span>
            <Menu />
          </div>
        </div>
        <Divider />
        <div className="h-[52px] flex items-center pl-[25px] pr-[21px] justify-between flex-none">
          <span className="text-[23px] text-[#c8c8c8]">整列</span>
          <Menu />
        </div>
        <div className="mt-[12px] flex items-center flex-none">
          <span className="ml-[14px] w-[184px] text-[23px] text-[#8a8a8a] flex-none whitespace-nowrap">レイヤーを整列 :</span>
          <div className="w-[210px] h-[49px] rounded-[8px] bg-[#313131] flex items-center pl-[17px] text-[23px] text-[#606060]">
            選択範囲
            <div className="ml-auto mr-[19px]"><Chevron c="#808080" /></div>
          </div>
        </div>
        <div className="h-[82px] flex items-center flex-none">
          {icons.map((g, i) => (
            <svg key={i} width={32} height={30} viewBox="0 0 32 30" fill="#6a6a6a" className={gaps[i] + " flex-none"}>{g}</svg>
          ))}
        </div>
        <div className="ml-[12px] w-[390px] h-[2px] bg-[#111] flex-none" />
        <div className="h-[50px] flex items-center pl-[14px] text-[23px] text-[#8a8a8a] flex-none">レイヤーを配置 :</div>
        <Divider />
        <div className="h-[48px] flex items-center pl-[25px] text-[23px] text-[#b8b8b8] flex-none">オーディオ</div>
        <Divider />
        <div className="h-[49px] flex items-center pl-[25px] text-[23px] text-[#b8b8b8] flex-none">エフェクト＆プリセット</div>
        <Divider />
        <div className="h-[50px] flex items-center pl-[25px] pr-[21px] justify-between flex-none">
          <span className="text-[23px] text-[#d0d0d0]">ブラシ</span>
          <Menu />
        </div>
        <BrushGrid />
        <div className="mt-[12px] flex flex-none">
          <div className="w-[266px] flex-none ml-[2px]">
            <ParamRow label="直径 :" value="13 px" />
            <ParamRow label="角度 :" value="0 °" />
            <ParamRow label="真円率 :" value="100 %" />
            <ParamRow label="硬さ :" value="0 %" />
            <div className="h-[33px] flex items-center">
              <Check dim className="ml-[82px]" />
              <span className="ml-[19px] text-[23px] text-[#6f6f6f]">間隔</span>
              <span className="ml-[6px] text-[21px] text-[#707070]">25 %</span>
            </div>
          </div>
          <div className="ml-[-2px] flex-none">
            <div className="mt-[11px] w-[134px] h-[134px] border-[2px] border-[#111] flex items-center justify-center">
              <div className="w-[22px] h-[22px] rounded-full bg-[radial-gradient(circle,#8a8a8a_0%,#6a6a6a_30%,rgba(100,100,100,0)_72%)]" />
            </div>
            <div className="mt-[14px] flex items-center">
              <svg width={24} height={24} viewBox="0 0 24 24" className="ml-[31px] flex-none"><path d="M0 0h24v24H12L0 14z" fill="#6f6f6f" /><path d="M0 16l8 8H0z" fill="#6f6f6f" /></svg>
              <svg width={22} height={26} viewBox="0 0 22 26" className="ml-[26px] flex-none"><path d="M1 5h20M8 5V2h6v3M3 5v19h16V5M8 9v12M11 9v12M14 9v12" fill="none" stroke="#6f6f6f" strokeWidth="2" /></svg>
            </div>
          </div>
        </div>
        <div className="mt-[12px] h-[40px] flex items-center flex-none">
          <div className="ml-[12px] w-[212px] overflow-hidden flex-none whitespace-nowrap">
            <span className="block ml-[-21px] text-[23px] text-[#6f6f6f]">ブラシダイナミックス</span>
          </div>
          <div className="ml-[6px] w-[166px] h-[2px] bg-[#111] flex-none" />
        </div>
        <Sel label="サイズ :" text="筆圧" mt="mt-[6px] ml-[2px]" />
        <div className="h-[44px] ml-[2px] flex items-center flex-none">
          <Lab lw={173}>最小サイズ :</Lab>
          <span className="ml-[9px] text-[21px] text-[#707070]">1 %</span>
        </div>
        <Sel label="角度 :" text="オフ" mt="ml-[2px]" />
        <Sel label="真円率 :" text="オフ" mt="mt-[6px] ml-[2px]" />
        <Sel label="不透明度 :" text="オフ" mt="mt-[6px] ml-[2px]" />
        <Sel label="流量 :" text="オフ" mt="mt-[6px] ml-[2px]" />
        <div className="mt-[23px]"><Divider /></div>
        <div className="h-[49px] flex items-center pl-[25px] pr-[21px] justify-between flex-none">
          <span className="text-[23px] text-[#d0d0d0]">ペイント</span>
          <Menu />
        </div>
        <div className="h-[101px] flex flex-none">
          <div className="w-[221px] pt-[18px] flex-none">
            <div className="h-[36px] flex items-center">
              <Lab lw={134}>不透明度 :</Lab>
              <span className="ml-[10px] text-[21px] text-[#707070]">0 %</span>
            </div>
            <div className="h-[36px] flex items-center">
              <Lab lw={134}>流量 :</Lab>
              <span className="ml-[12px] text-[21px] text-[#707070]">0 %</span>
            </div>
          </div>
          <div className="w-[40px] pt-[24px] flex flex-col items-center flex-none">
            <div className="w-[16px] h-[16px] rounded-full bg-[radial-gradient(circle,#4a4a4a_0%,rgba(70,70,70,0)_72%)]" />
            <span className="mt-[8px] text-[17px] text-[#6f6f6f]">13</span>
          </div>
          <div className="ml-[54px] relative w-[90px] flex-none">
            <div className="absolute left-[28px] top-[45px] w-[52px] h-[50px] bg-white border-[2px] border-black" />
            <div className="absolute left-0 top-[15px] w-[55px] h-[53px] bg-[#e83524] border-[3px] border-white outline-[2px] outline-black" />
            <svg width={24} height={24} viewBox="0 0 24 24" className="absolute left-[60px] top-[16px]"><path d="M3 8l6-5v3h7l5 7v8l-3 3-3-5v-5l-2-2H9v4z" fill="#3e3e3e" /></svg>
            <svg width={22} height={22} viewBox="0 0 22 22" className="absolute left-[-2px] top-[75px]"><rect x="1" y="1" width="13" height="13" fill="none" stroke="#3e3e3e" strokeWidth="2" /><rect x="8" y="8" width="13" height="13" fill="#3e3e3e" /></svg>
          </div>
        </div>
        <div className="flex items-center flex-none">
          <Lab lw={134}>モード :</Lab>
          <DD w={230} h={38} text="通常" />
          <svg width={34} height={34} viewBox="0 0 34 34" className="ml-[2px] flex-none"><path d="M2 32l-1-4L18 10l5 5L6 32z" fill="none" stroke="#6f6f6f" strokeWidth="2" /><path d="M18 9l5-5c3-3 8 2 5 5l-5 5z" fill="#6f6f6f" /><path d="M16 7l10 10" stroke="#6f6f6f" strokeWidth="3" /></svg>
        </div>
        <div className="mt-[8px] flex items-center flex-none">
          <Lab lw={134}>チャンネル :</Lab>
          <DD w={230} h={38} text="RGBA" />
        </div>
        <div className="mt-[8px] flex items-center flex-none">
          <Lab lw={134}>種類 :</Lab>
          <DD w={230} h={38} text="一定" />
          <span className="ml-[6px] text-[21px] tracking-[4px] text-[#707070]">1 f</span>
        </div>
        <div className="mt-[8px] flex items-center flex-none">
          <Lab lw={134}>消去 :</Lab>
          <DD w={282} h={38} text="レイヤーソース..." />
        </div>
        <div className="h-[48px] flex items-center flex-none">
          <span className="ml-[2px] w-[196px] text-[23px] text-[#6f6f6f] flex-none whitespace-nowrap">コピーオプション</span>
          <div className="w-[220px] h-[2px] bg-[#111] flex-none" />
        </div>
        <div className="mt-[2px] h-[43px] flex items-center flex-none">
          <Lab lw={134}>プリセット :</Lab>
          <div className="ml-[10px] w-[50px] h-[43px] rounded-[8px] bg-[#313131] flex items-center justify-center flex-none"><Stamp /></div>
          <div className="ml-[15px]"><Stamp /></div>
          <div className="ml-[18px]"><Stamp /></div>
          <div className="ml-[18px]"><Stamp /></div>
          <div className="ml-[18px]"><Stamp /></div>
        </div>
        <div className="mt-[17px] flex items-center flex-none">
          <Lab lw={134}>ソース :</Lab>
          <div className="ml-[2px]"><DD w={282} h={38} text="現在のレイヤー" /></div>
        </div>
        <div className="mt-[15px] flex items-center flex-none">
          <Check dim className="ml-[18px]" />
          <span className="ml-[19px] text-[23px] text-[#6f6f6f]">調整</span>
          <Box className="ml-[11px] !border-[#777]" />
          <span className="ml-[20px] text-[23px] text-[#6f6f6f] whitespace-nowrap">ソースフレームの時...</span>
        </div>
      </div>
      <div className="ml-[8px] mt-[8px] w-[18px] h-[1566px] rounded-[9px] bg-[#4a4a4a] flex-none" />
    </div>
  );
}

function AnchorArrow({ a }: { a: number }) {
  const horiz = a === 90 || a === -90;
  const diag = a % 90 !== 0;
  const d = horiz ? "M24 8l11 13h-6v20h-10V21h-6z" : diag ? "M24 3l10 22-7-3v20h-6V22l-7 3z" : "M24 3l7 19h-5v24h-4V22h-5z";
  return (
    <svg width={40} height={40} viewBox="0 0 48 48" className="flex-none">
      <path d={d} fill="#b8b8b8" transform={`rotate(${a} 24 24)`} />
    </svg>
  );
}

function Dialog() {
  const angles: (number | null)[] = [-45, 0, 45, -90, null, 90, -135, 180, 135];
  return (
    <div className="absolute left-[1046px] top-[448px] w-[1326px] h-[1116px] rounded-[22px] bg-[#1e1e1e] flex flex-col overflow-hidden shadow-[0_0_70px_rgba(0,0,0,0.45)] border-t border-[#ddd]">
      <div className="h-[56px] bg-[#c8c6c3] border-b-[2px] border-black flex items-center justify-center text-[23.800px] font-bold text-[#2a2a2a] flex-none">コンポジション設定</div>
      <div className="mt-[30px] flex items-center flex-none">
        <span className="w-[485px] text-right text-[23.500px] text-[#b8b8b8] flex-none">コンポジション名 :</span>
        <div className="ml-[18px] w-[538px] h-[47px] rounded-[8px] bg-[#0e0e0e] border-[2px] border-[#2b2b2b] text-[23px] text-[#c4c4c4] flex items-center pl-[21px]">コンポ 1</div>
      </div>
      <div className="mt-[23px] h-[47px] flex items-start pl-[44px] text-[23px] text-[#b8b8b8] flex-none">
        <span className="w-[91px] h-[40px] flex items-center flex-none">基本</span>
        <span className="w-[88px] flex-none"><span className="h-[46px] w-[48px] flex items-center border-b-[3px] border-[#ddd] pb-[6px] text-[#d0d0d0]">高度</span></span>
        <span className="h-[40px] flex items-center flex-none">3D レンダラー</span>
      </div>
      <div className="mt-[40px] flex items-center flex-none">
        <span className="w-[331px] text-right text-[23px] text-[#b8b8b8] flex-none">アンカー :</span>
        <div className="ml-[24px] grid grid-cols-[repeat(3,46px)] auto-rows-[47px] gap-x-[4px] gap-y-[3px]">
          {angles.map((a, i) => (
            <div key={i} className={(a === null ? "bg-[#505050] border-[#6a6a6a] " : "bg-[#0e0e0e] border-[#2b2b2b] ") + "border-[2px] rounded-[8px] flex items-center justify-center"}>
              {a !== null && <AnchorArrow a={a} />}
            </div>
          ))}
        </div>
      </div>
      <div className="mt-[36px] ml-[114px] flex items-center flex-none">
        <Box />
        <span className="ml-[18px] text-[23.800px] text-[#b8b8b8] whitespace-nowrap">ネスト時またはレンダーキューでフレームレートを保持</span>
      </div>
      <div className="mt-[34px] ml-[114px] flex items-center flex-none">
        <Box />
        <span className="ml-[18px] text-[23.800px] text-[#b8b8b8] whitespace-nowrap">ネスト時に解像度を保持</span>
      </div>
      <div className="mt-[55px] ml-[71px] w-[1203px] h-[378px] rounded-[12px] border-[2px] border-[#2e2e2e] relative flex-none">
        <span className="absolute left-[12px] top-[-15px] px-[8px] bg-[#1e1e1e] text-[23px] text-[#b8b8b8]">モーションブラー</span>
        <div className="mt-[21px] ml-[58px] h-[73px] flex items-center">
          <div className="w-[288px] h-[70px] rounded-[30px] border-[5px] border-[#e83a1f] flex items-center pl-[19px] flex-none">
            <span className="text-[23px] text-[#b8b8b8]">シャッター角度 :</span>
            <span className="ml-[22px] text-[22px] text-[#5a9cf5]">500</span>
            <span className="ml-[5px] mb-[10px] text-[16px] text-[#c4c4c4]">°</span>
          </div>
          <div className="ml-[42px] w-[332px] h-[73px] rounded-[30px] border-[5px] border-[#e83a1f] flex items-center pl-[18px] flex-none">
            <span className="text-[23px] text-[#b8b8b8]">シャッターフェーズ :</span>
            <span className="ml-[24px] text-[22px] text-[#5a9cf5]">-150</span>
            <span className="ml-[5px] mb-[10px] text-[16px] text-[#c4c4c4]">°</span>
          </div>
        </div>
        <div className="mt-[15px] mx-[17px] h-[2px] bg-[#444]" />
        <div className="mt-[37px] ml-[18px] h-[24px] flex items-center text-[23.400px] text-[#b8b8b8]">
          <span className="w-[261px] flex-none whitespace-nowrap">サンプル数 (フレーム) :</span>
          <span className="w-[126px] text-[22px] text-[#5a9cf5] flex-none">16</span>
          <span className="w-[247px] flex-none whitespace-nowrap">最大適応サンプル数 :</span>
          <span className="text-[22px] text-[#5a9cf5] flex-none">128</span>
        </div>
        <div className="mt-[30px] ml-[18px] text-[23.800px] leading-[40px] text-[#b8b8b8] whitespace-nowrap">
          <div>「フレームあたりのサンプル数」は、クラシック 3D レイヤー、シェイプレイヤー、および特</div>
          <div>定のエフェクトに対するモーションブラーのサンプル数を指定します。2D レイヤーのモーシ</div>
          <div>ョンには、自動的に「最大適応サンプル数」で指定された値を上限とするサンプル数が使用</div>
          <div className="mt-[-4px]">されます。</div>
        </div>
      </div>
      <div className="mt-auto mb-[30px] flex items-center px-[30px] flex-none">
        <Check />
        <span className="ml-[19px] pt-[2px] text-[23.500px] text-[#b8b8b8]">プレビュー</span>
        <div className="ml-auto w-[166px] h-[48px] rounded-full bg-[#4a4a4a] border-[4px] border-[#777] flex items-center justify-center text-[22px] font-bold text-[#e0e0e0] flex-none">キャンセル</div>
        <div className="ml-[18px] w-[105px] h-[48px] rounded-full bg-[#2e6ae0] flex items-center justify-center text-[22px] font-bold text-white flex-none">OK</div>
      </div>
    </div>
  );
}

export default function App() {
  return (
    <div className="relative w-[3420px] h-[2006px] overflow-hidden bg-[#5b5038] font-['Noto_Sans','Noto_Sans_CJK_JP',sans-serif] leading-none">
      <div className="mt-[5px] h-[2000px] rounded-t-[20px] rounded-b-[14px] overflow-hidden bg-black flex flex-col">
        <div className="h-[39px] bg-[#e9e9e7] flex items-center relative flex-none">
          <div className="ml-[10px] w-[18px] h-[18px] rounded-full bg-[#cfcfcd] flex items-center justify-center flex-none">
            <div className="w-[6px] h-[6px] rounded-full bg-[#555]" />
          </div>
          <div className="ml-[12px] w-[18px] h-[18px] rounded-full bg-[#cfcfcd] flex-none" />
          <div className="ml-[12px] w-[18px] h-[18px] rounded-full bg-[#cfcfcd] flex-none" />
          <span className="absolute left-[1098px] text-[21px] text-[#a8a8a8] whitespace-pre">Adobe After Effects 2025 - /Users/annakaniko/Desktop/h           /大村先生/ブログ/02_モーションブラー/モーションブラー.aep *</span>
        </div>
        <div className="mt-[1px] h-[80px] bg-[#1e1e1e] flex flex-none">
          <ToolBarLeft />
          <ToolBarMid />
          <ToolBarRight />
        </div>
        <div className="mt-[3px] flex-1 min-h-0 flex">
          <div className="ml-[2px] w-[2776px] flex-none flex flex-col">
            <div className="h-[1280px] flex gap-[8px] flex-none">
              <Project />
              <Comp />
            </div>
            <div className="mt-[8px] flex-1 min-h-0 flex">
              <Timeline />
            </div>
          </div>
          <div className="ml-[8px] w-[632px] flex-none flex flex-col">
            <RightTop />
            <Panels />
          </div>
        </div>
      </div>
      <Dialog />
    </div>
  );
}
